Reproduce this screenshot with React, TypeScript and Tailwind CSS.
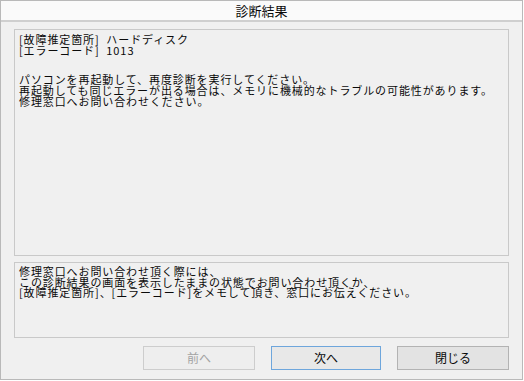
import React from "react";

const font = { fontFamily: '"MS UI Gothic", "Noto Sans CJK JP", sans-serif' };

export default function App() {
  return (
    <div className="w-[524px] h-[381px] bg-white">
      <div
        className="w-[523px] h-[380px] border border-[#b9b9b9] bg-[#f0f0f0] flex flex-col text-[#0a0a0a]"
        style={font}
      >
        <div className="h-[21px] shrink-0 bg-[#fafafa] border-b-2 border-[#cfcfcf] flex items-center justify-center text-[13px] leading-none">
          診断結果
        </div>
        <div className="flex-1 flex flex-col px-[13px] pt-[7px]">
          <div className="h-[227px] border border-[#c9c9c9] bg-[#f0f0f0] px-[4px] pt-[4px] text-[11px] leading-[11px] tracking-[0.9px]">
            <div>[故障推定箇所]&nbsp;&nbsp;ハードディスク</div>
            <div>[エラーコード]&nbsp;&nbsp;1013</div>
            <div className="h-[18px]" />
            <div>パソコンを再起動して、再度診断を実行してください。</div>
            <div>再起動しても同じエラーが出る場合は、メモリに機械的なトラブルの可能性があります。</div>
            <div>修理窓口へお問い合わせください。</div>
          </div>
          <div className="mt-[6px] h-[76px] border border-[#c9c9c9] bg-[#f0f0f0] px-[4px] pt-[3px] text-[11px] leading-[10.5px] tracking-[0.9px]">
            <div>修理窓口へお問い合わせ頂く際には、</div>
            <div>この診断結果の画面を表示したままの状態でお問い合わせ頂くか、</div>
            <div>[故障推定箇所]、[エラーコード]をメモして頂き、窓口にお伝えください。</div>
          </div>
          <div className="mt-[8px] flex justify-end gap-[16px]">
            <div className="w-[112px] h-[24px] border border-[#cdcdcd] bg-[#eeeeee] text-[#a3a3a3] flex items-center justify-center text-[12px]">
              前へ
            </div>
            <div className="w-[110px] h-[24px] border border-[#6ea6dc] bg-[#e8e8e8] flex items-center justify-center text-[12px]">
              次へ
            </div>
            <div className="w-[112px] h-[24px] border border-[#b3b3b3] bg-[#e3e3e3] flex items-center justify-center text-[12px]">
              閉じる
            </div>
          </div>
        </div>
      </div>
    </div>
  );
}
